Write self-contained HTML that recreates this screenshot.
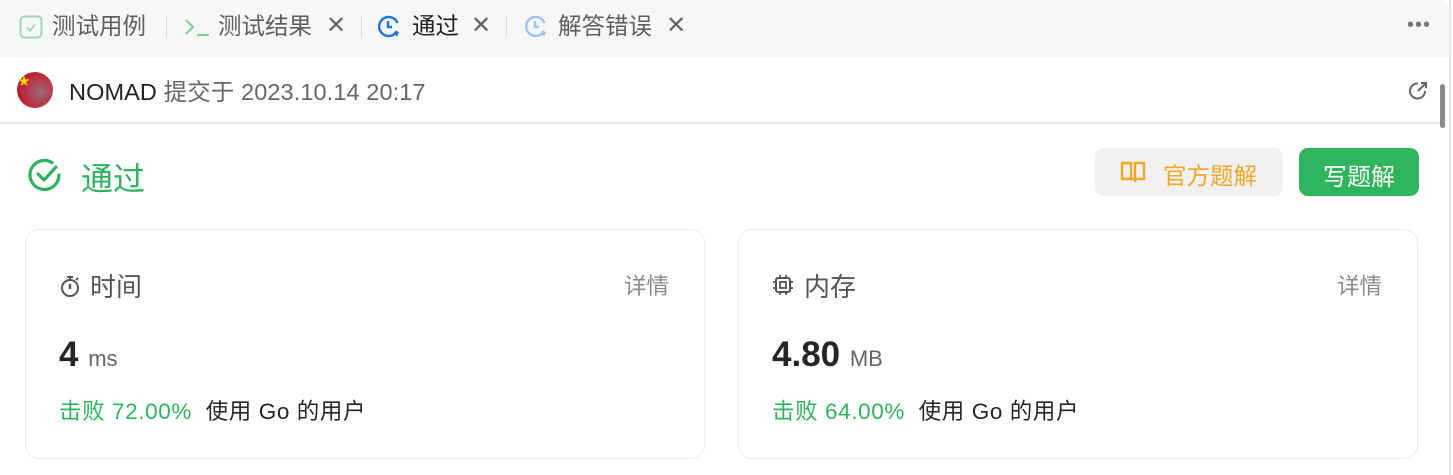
<!DOCTYPE html>
<html><head><meta charset="utf-8"><style>
*{margin:0;padding:0;box-sizing:border-box}
body{width:1453px;height:475px;overflow:hidden;background:#fff;font-family:"Liberation Sans","Noto Sans CJK SC",sans-serif;position:relative}
.abs{position:absolute;white-space:nowrap}
.tabbar{position:absolute;left:0;top:0;width:1450px;height:57px;background:#f7f7f8;border-top-right-radius:10px}
.tab{font-size:23.5px;color:#5f5f5f;top:11px;line-height:30px}
.x{font-size:24px;color:#666;top:11px}
.sep{position:absolute;top:16px;width:1px;height:22px;background:#ddd}
.card{position:absolute;top:229px;width:680px;height:230px;border:1.5px solid #ececec;border-radius:14px}
.h{font-size:26px;color:#555;top:267px}
.det{font-size:22.5px;color:#8a8a8a;top:269px}
.num{font-size:35px;font-weight:bold;color:#262626;top:335px}
.unit{font-size:22px;color:#666}
.beat{font-size:22.5px;top:394px;color:#262626;letter-spacing:0.6px}
.g{color:#2db55d}
</style></head><body>
<div class="tabbar"></div>
<svg class="abs" style="left:19px;top:15px" width="24" height="24" viewBox="0 0 24 24"><rect x="1.5" y="1.5" width="21" height="21" rx="4" fill="none" stroke="#9fd8ae" stroke-width="2"/><path d="M8 12.5l3 3 5-6" fill="none" stroke="#9fd8ae" stroke-width="2"/></svg>
<div class="abs tab" style="left:52px">测试用例</div>
<div class="sep" style="left:166px"></div>
<svg class="abs" style="left:184px;top:18px" width="28" height="20" viewBox="0 0 28 20"><path d="M2 2l7 7-7 7M13 17h12" fill="none" stroke="#7fcf96" stroke-width="2"/></svg>
<div class="abs tab" style="left:218px">测试结果</div>
<div class="abs x" style="left:326px">✕</div>
<div class="sep" style="left:361px"></div>
<svg class="abs" style="left:376px;top:14px" width="26" height="26" viewBox="0 0 26 26"><path d="M21 17A9.5 9.5 0 1 1 21.5 9" fill="none" stroke="#1a73e8" stroke-width="2.4"/><path d="M12 7v6h4" fill="none" stroke="#1a73e8" stroke-width="2.4"/><path d="M18 18l5 0-2 5z" fill="#1a73e8"/></svg>
<div class="abs tab" style="left:412px;color:#222">通过</div>
<div class="abs x" style="left:471px">✕</div>
<div class="sep" style="left:506px"></div>
<svg class="abs" style="left:523px;top:14px" width="26" height="26" viewBox="0 0 26 26"><path d="M21 17A9.5 9.5 0 1 1 21.5 9" fill="none" stroke="#9cc4f5" stroke-width="2.4"/><path d="M12 7v6h4" fill="none" stroke="#9cc4f5" stroke-width="2.4"/><path d="M18 18l5 0-2 5z" fill="#9cc4f5"/></svg>
<div class="abs tab" style="left:558px">解答错误</div>
<div class="abs x" style="left:666px">✕</div>
<div class="abs" style="left:1407px;top:14px;font-size:20px;color:#777;letter-spacing:1px">•••</div>

<div class="abs" style="left:17px;top:72px;width:36px;height:36px;border-radius:50%;background:radial-gradient(circle at 65% 55%,#9a6a7a,#c2263a 60%,#8a1020)"></div>
<div class="abs" style="left:18px;top:72px;color:#ffd400;font-size:12px">★</div>
<div class="abs" style="left:69px;top:73px;font-size:23.5px;color:#222;letter-spacing:0.1px">NOMAD <span style="color:#666">提交于 2023.10.14 20:17</span></div>
<svg class="abs" style="left:1407px;top:80px" width="22" height="22" viewBox="0 0 22 22"><path d="M18 11A7.5 7.5 0 1 1 11 3.5" fill="none" stroke="#666" stroke-width="2"/><path d="M11 11l8-8M14 3h5v5" fill="none" stroke="#666" stroke-width="2"/></svg>
<div class="abs" style="left:0;top:122px;width:1440px;height:2px;background:#ebebeb"></div>
<div class="abs" style="left:1440px;top:84px;width:5px;height:44px;background:#8a8a8a;border-radius:3px"></div>
<div class="abs" style="left:1449px;top:0;width:1.5px;height:475px;background:#e6e6e6"></div>

<svg class="abs" style="left:27px;top:157px" width="36" height="36" viewBox="0 0 36 36"><path d="M32 18A14.5 14.5 0 1 1 25 5.5" fill="none" stroke="#2db55d" stroke-width="3.2" stroke-linecap="round"/><path d="M11 17l6 6 12-13" fill="none" stroke="#2db55d" stroke-width="3.2" stroke-linecap="round" stroke-linejoin="round"/></svg>
<div class="abs" style="left:81px;top:154px;font-size:32px;color:#2db55d">通过</div>
<div class="abs" style="left:1095px;top:148px;width:188px;height:48px;border-radius:9px;background:#f1f1f3"></div>
<svg class="abs" style="left:1120px;top:161px" width="26" height="22" viewBox="0 0 26 22"><path d="M2 2h9v16H2zM15 2h9v16h-9zM11 18h4v3" fill="none" stroke="#f5a623" stroke-width="2.4"/></svg>
<div class="abs" style="left:1163px;top:157px;font-size:23.5px;color:#f5a623">官方题解</div>
<div class="abs" style="left:1299px;top:148px;width:120px;height:48px;border-radius:9px;background:#2db55d"></div>
<div class="abs" style="left:1323px;top:157px;font-size:24px;color:#fff">写题解</div>

<div class="card" style="left:25px"></div>
<div class="card" style="left:738px"></div>
<svg class="abs" style="left:59px;top:274px" width="22" height="24" viewBox="0 0 22 24"><circle cx="11" cy="14" r="8" fill="none" stroke="#555" stroke-width="2"/><path d="M8 3h6M11 3v3M17 6l2-2" stroke="#555" stroke-width="2"/><path d="M11 10v5" stroke="#555" stroke-width="2.4"/></svg>
<div class="abs h" style="left:90px">时间</div>
<div class="abs det" style="left:624px">详情</div>
<div class="abs num" style="left:59px">4 <span class="unit" style="font-weight:normal">ms</span></div>
<div class="abs beat" style="left:59px"><span class="g">击败 72.00%</span>&nbsp; 使用 Go 的用户</div>

<svg class="abs" style="left:772px;top:274px" width="22" height="22" viewBox="0 0 22 22"><rect x="4" y="4" width="14" height="14" rx="2" fill="none" stroke="#555" stroke-width="2"/><rect x="8" y="8" width="6" height="6" fill="none" stroke="#555" stroke-width="1.8"/><path d="M8 1v3M14 1v3M8 18v3M14 18v3M1 8h3M1 14h3M18 8h3M18 14h3" stroke="#555" stroke-width="1.8"/></svg>
<div class="abs h" style="left:804px">内存</div>
<div class="abs det" style="left:1337px">详情</div>
<div class="abs num" style="left:772px">4.80 <span class="unit" style="font-weight:normal">MB</span></div>
<div class="abs beat" style="left:772px"><span class="g">击败 64.00%</span>&nbsp; 使用 Go 的用户</div>
</body></html>
